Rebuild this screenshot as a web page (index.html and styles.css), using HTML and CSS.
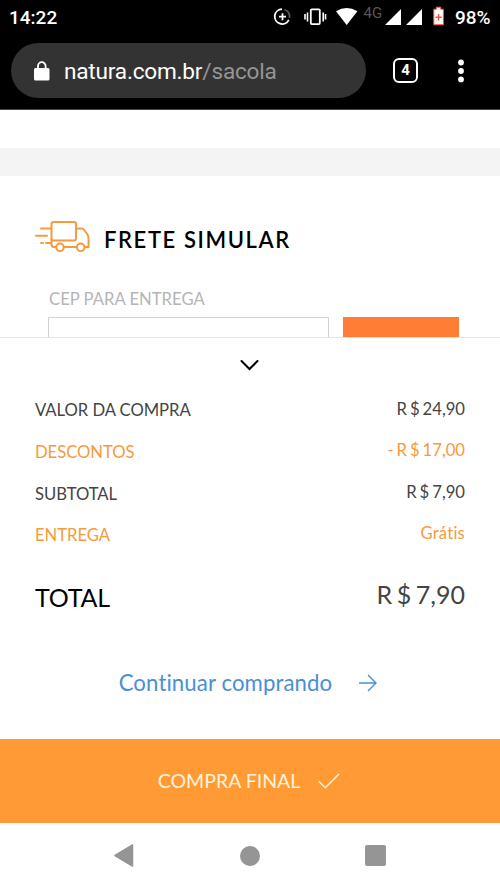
FILE: index.html
```html
<!DOCTYPE html>
<html lang="pt-BR">
<head>
<meta charset="utf-8">
<title>Sacola</title>
<link rel="stylesheet" href="styles.css">
</head>
<body>
<div class="phone">
  <header class="chrome">
    <div class="status">
      <span class="clock">14:22</span>
      <svg class="status-icons" width="174" height="34" viewBox="270 0 174 34">
        <g fill="none" stroke="#fff" stroke-width="1.8">
          <path d="M282 9.2a7.4 7.4 0 1 0 6.8 10.6"/>
          <path d="M284.5 9.5a7.4 7.4 0 0 1 5 8.500" stroke="#555"/>
          <path d="M279 16.700h7M282.500 13.200v7"/>
          <rect x="310.800" y="9.300" width="9" height="14.800" rx="1"/>
          <path d="M307.500 12.500v9M323.200 12.500v9M305 14v5.500M325.500 14v5.500" stroke-width="1.600"/>
        </g>
        <path d="M336 11.200q10.700-6.600 21.400 0L346.700 25z" fill="#fff"/>
        <text class="net" x="363.500" y="18">4G</text>
        <path d="M385 25L401 9v16zM406 25l16-16v16z" fill="#fff"/>
        <path d="M433.800 9.200h2.500v-2h4.500v2h2.600v15.600h-9.600z" fill="#fff" stroke="#f0543b" stroke-width="1"/>
        <path d="M435.500 17.200h6.200M438.600 14v6.400" stroke="#f0543b" stroke-width="1.400"/>
      </svg>
      <span class="percent">98%</span>
    </div>
    <div class="toolbar">
      <div class="address">
        <svg class="lock" width="16" height="20" viewBox="0 0 16 20"><rect y="7" width="15.500" height="12.500" rx="1.500" fill="#fff"/><path d="M4 8V5a3.800 3.800 0 0 1 7.600 0v3" fill="none" stroke="#fff" stroke-width="1.800"/></svg>
        <span class="url">natura.com.br<span class="path">/sacola</span></span>
      </div>
      <div class="tabs">4</div>
      <svg class="more" width="8" height="24" viewBox="0 0 8 24" fill="#fff"><circle cx="4" cy="3.500" r="2.900"/><circle cx="4" cy="12" r="2.900"/><circle cx="4" cy="20.400" r="2.900"/></svg>
    </div>
  </header>

  <main class="page">
    <div class="divider"></div>
    <section class="shipping">
      <div class="heading">
        <svg width="56" height="34" viewBox="0 0 56 34" fill="none" stroke="#f79a3c" stroke-width="2" stroke-linecap="round" stroke-linejoin="round">
          <rect x="16.500" y="2" width="24.500" height="18.500" rx="2"/>
          <path d="M16.500 19v5.500q0 2.500 2.500 2.500h2.200M28.500 27h13.200M49.800 27h3.700V18.500q0-2.500-1.300-4.500l-3-4q-1-1.500-3-1.500H41"/>
          <path d="M6 8.500h10M1 15.700h11M6 23h2M11 23h5"/>
          <circle cx="25" cy="27.300" r="3.800"/><circle cx="45.700" cy="27.300" r="3.800"/>
        </svg>
        <h1>FRETE SIMULAR</h1>
      </div>
      <div class="label">CEP PARA ENTREGA</div>
      <div class="form"><div class="input"></div><div class="submit"></div></div>
    </section>

    <section class="summary">
      <svg class="chevron" width="20" height="12" viewBox="0 0 20 12" fill="none" stroke="#000" stroke-width="2" stroke-linecap="round"><path d="M1.500 2l8 8 8-8"/></svg>
      <div class="row"><span class="name">VALOR DA COMPRA</span><span class="value">R $ 24,90</span></div>
      <div class="row accent"><span class="name">DESCONTOS</span><span class="value">- R $ 17,00</span></div>
      <div class="row"><span class="name">SUBTOTAL</span><span class="value">R $ 7,90</span></div>
      <div class="row accent"><span class="name">ENTREGA</span><span class="value gratis">Grátis</span></div>
      <div class="row total"><span class="name">TOTAL</span><span class="value">R $ 7,90</span></div>
      <a class="continue">Continuar comprando
        <svg width="18" height="18" viewBox="0 0 18 18" fill="none" stroke="#4a8fd6" stroke-width="1.400"><path d="M0 9h17M9 1l8 8-8 8"/></svg>
      </a>
    </section>
  </main>

  <div class="checkout">COMPRA FINAL
    <svg width="22" height="16" viewBox="0 0 22 16" fill="none" stroke="#fff3dc" stroke-width="1.500"><path d="M.7 8.300l6.600 6.400L21 1"/></svg>
  </div>
  <nav class="system">
    <svg width="20" height="23" viewBox="0 0 20 23"><path d="M1 11.500L18.500 1v21z" fill="#959595" stroke="#959595" stroke-width="1.500" stroke-linejoin="round"/></svg>
    <span class="home"></span>
    <span class="recent"></span>
  </nav>
</div>
</body>
</html>
```
FILE: styles.css
```css
* { box-sizing: border-box; }
body { margin: 0; background: #fff; font-family: Lato, sans-serif; font-variant-ligatures: none; }
.phone { width: 500px; height: 889px; display: flex; flex-direction: column; overflow: hidden; }
.chrome { height: 110px; background: #000; border-bottom: 1px solid #444; font-family: Roboto, sans-serif; color: #fff; flex: none; }
.status { height: 34px; display: flex; align-items: center; padding: 0 9px; font-weight: 500; font-size: 19px; }
.clock { flex: 1; }
.status-icons { margin-right: 11px; }
.net { font: 15px Roboto, sans-serif; fill: #555; }
.percent { width: 36px; font-size: 19px; white-space: nowrap; }
.toolbar { display: flex; align-items: center; padding: 9px 0 0 11px; }
.address { width: 355px; height: 55px; border-radius: 28px; background: #333; display: flex; align-items: center; padding-left: 23px; }
.url { margin: 2px 0 0 14px; font-size: 22.6px; letter-spacing: -.2px; white-space: nowrap; }
.lock { width: 16px; }
.path { color: #959595; }
.tabs { width: 25px; height: 25px; margin-left: 27px; border: 2px solid #fff; border-radius: 6px; font-size: 15px; font-weight: 700; line-height: 21px; text-align: center; }
.more { margin-left: 39px; }
.page { flex: none; height: 629px; padding-top: 38px; }
.divider { height: 28px; background: #f4f4f4; }
.shipping { height: 161px; padding: 45px 41px 0 35px; overflow: hidden; }
.heading { display: flex; align-items: center; height: 34px; }
.heading svg { margin-top: -2px; }
h1 { margin: 4px 0 0 13px; font-size: 22px; line-height: 28px; font-weight: 600; letter-spacing: 1.6px; white-space: nowrap; color: #000; }
.label { margin: 34px 0 0 14px; height: 20px; font-size: 16.67px; line-height: 20px; color: #b5b5b5; }
.form { display: flex; gap: 14px; margin: 8px 0 0 13px; }
.input { width: 281px; height: 50px; border: 1px solid #d2d2d2; }
.submit { width: 116px; height: 50px; background: #ff7d35; }
.summary { height: 402px; border-top: 1px solid #e4e4e4; padding: 21px 35px 0; background: #fff; }
.chevron { display: block; margin: 0 auto 20px; }
.row { display: flex; justify-content: space-between; height: 41.67px; font-size: 16.67px; line-height: 20px; color: #444; }
.name { padding-top: 9.2px; letter-spacing: -.05px; }
.value { padding-top: 7.5px; word-spacing: -1.3px; }
.gratis { letter-spacing: .2px; }
.accent { color: #f79a3c; }
.total { height: 72px; font-size: 25px; line-height: 32px; }
.total .name { padding-top: 23px; color: #000; letter-spacing: -.2px; }
.total .value { padding-top: 20px; word-spacing: -1.8px; }
.continue { display: flex; justify-content: center; align-items: center; gap: 27px; margin: 35px 0 0 -4px; height: 36px; font-size: 22.2px; letter-spacing: .1px; color: #4a8fd6; white-space: nowrap; }
.checkout { flex: none; height: 84px; background: #ff9a35; display: flex; justify-content: center; align-items: center; gap: 18px; padding: 0 2px 1px 0; font-size: 19.5px; color: #fff3dc; }
.system { flex: 1; display: flex; justify-content: space-between; align-items: center; padding: 0 114px 1px 114px; }
.home { width: 20px; height: 20px; border-radius: 50%; background: #959595; }
.recent { width: 21px; height: 21px; border-radius: 2px; background: #959595; }
```
